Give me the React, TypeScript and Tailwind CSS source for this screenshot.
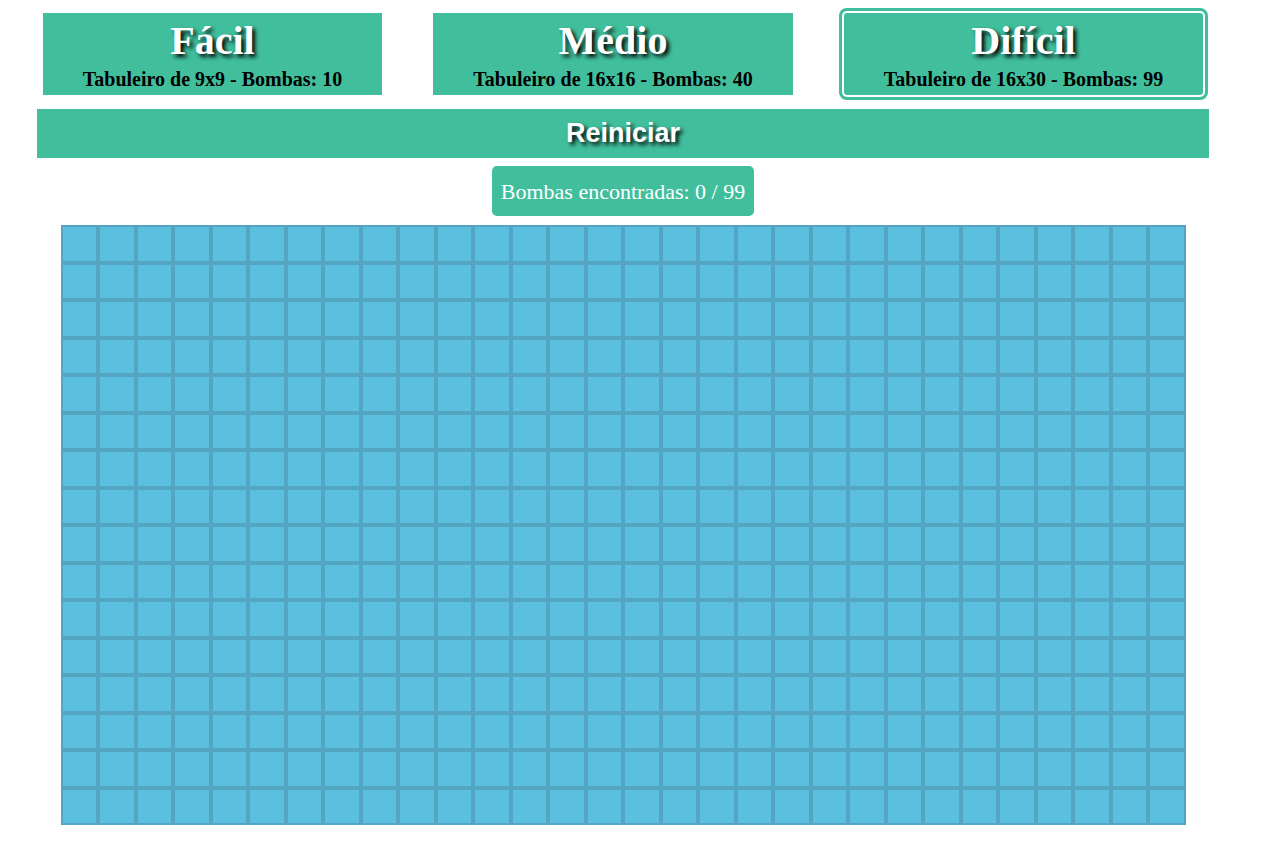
import React from "react";

const levels = [
  { name: "Fácil", info: "Tabuleiro de 9x9 - Bombas: 10", width: "w-[339px]", selected: false },
  { name: "Médio", info: "Tabuleiro de 16x16 - Bombas: 40", width: "w-[360px]", selected: false },
  { name: "Difícil", info: "Tabuleiro de 16x30 - Bombas: 99", width: "w-[359px]", selected: true },
];

const rows = 16;
const cols = 30;

export default function App() {
  const cells = Array.from({ length: rows * cols });
  return (
    <div className="min-h-[841px] bg-white pt-[13px]">
      <div className="ml-[37px] w-[1172px] flex flex-col items-center">
        <div className="w-full px-[6px] flex justify-between">
          {levels.map((lvl) => (
            <button
              key={lvl.name}
              className={`${lvl.width} h-[82px] bg-[#41bf9d] flex flex-col items-center pt-[8px] ${
                lvl.selected ? "rounded-[3px] shadow-[0_0_0_2px_#fff,0_0_0_5px_#41bf9d]" : ""
              }`}
            >
              <span className="font-['Liberation_Serif',serif] font-bold text-[40px] leading-[40px] text-white [text-shadow:3px_3px_4px_#000]">
                {lvl.name}
              </span>
              <span className="mt-[8px] font-['Liberation_Serif',serif] font-bold text-[20px] leading-[20px] text-black">
                {lvl.info}
              </span>
            </button>
          ))}
        </div>

        <button className="mt-[14px] w-full h-[49px] bg-[#41bf9d] flex items-center justify-center">
          <span className="font-['Liberation_Sans',Arial,sans-serif] font-bold text-[27px] text-white [text-shadow:3px_3px_4px_#000]">
            Reiniciar
          </span>
        </button>

        <div className="mt-[8px] h-[50px] px-[9px] rounded-[5px] bg-[#41bf9d] flex items-center justify-center">
          <span className="font-['Liberation_Serif',serif] text-[22px] text-white">Bombas encontradas: 0 / 99</span>
        </div>

        <div className="mt-[9px] w-[1125px] grid grid-cols-30">
          {cells.map((_, i) => (
            <div key={i} className="h-[37.5px] border-2 border-[#53a5c2] bg-[#5bc0e0]" />
          ))}
        </div>
      </div>
    </div>
  );
}
